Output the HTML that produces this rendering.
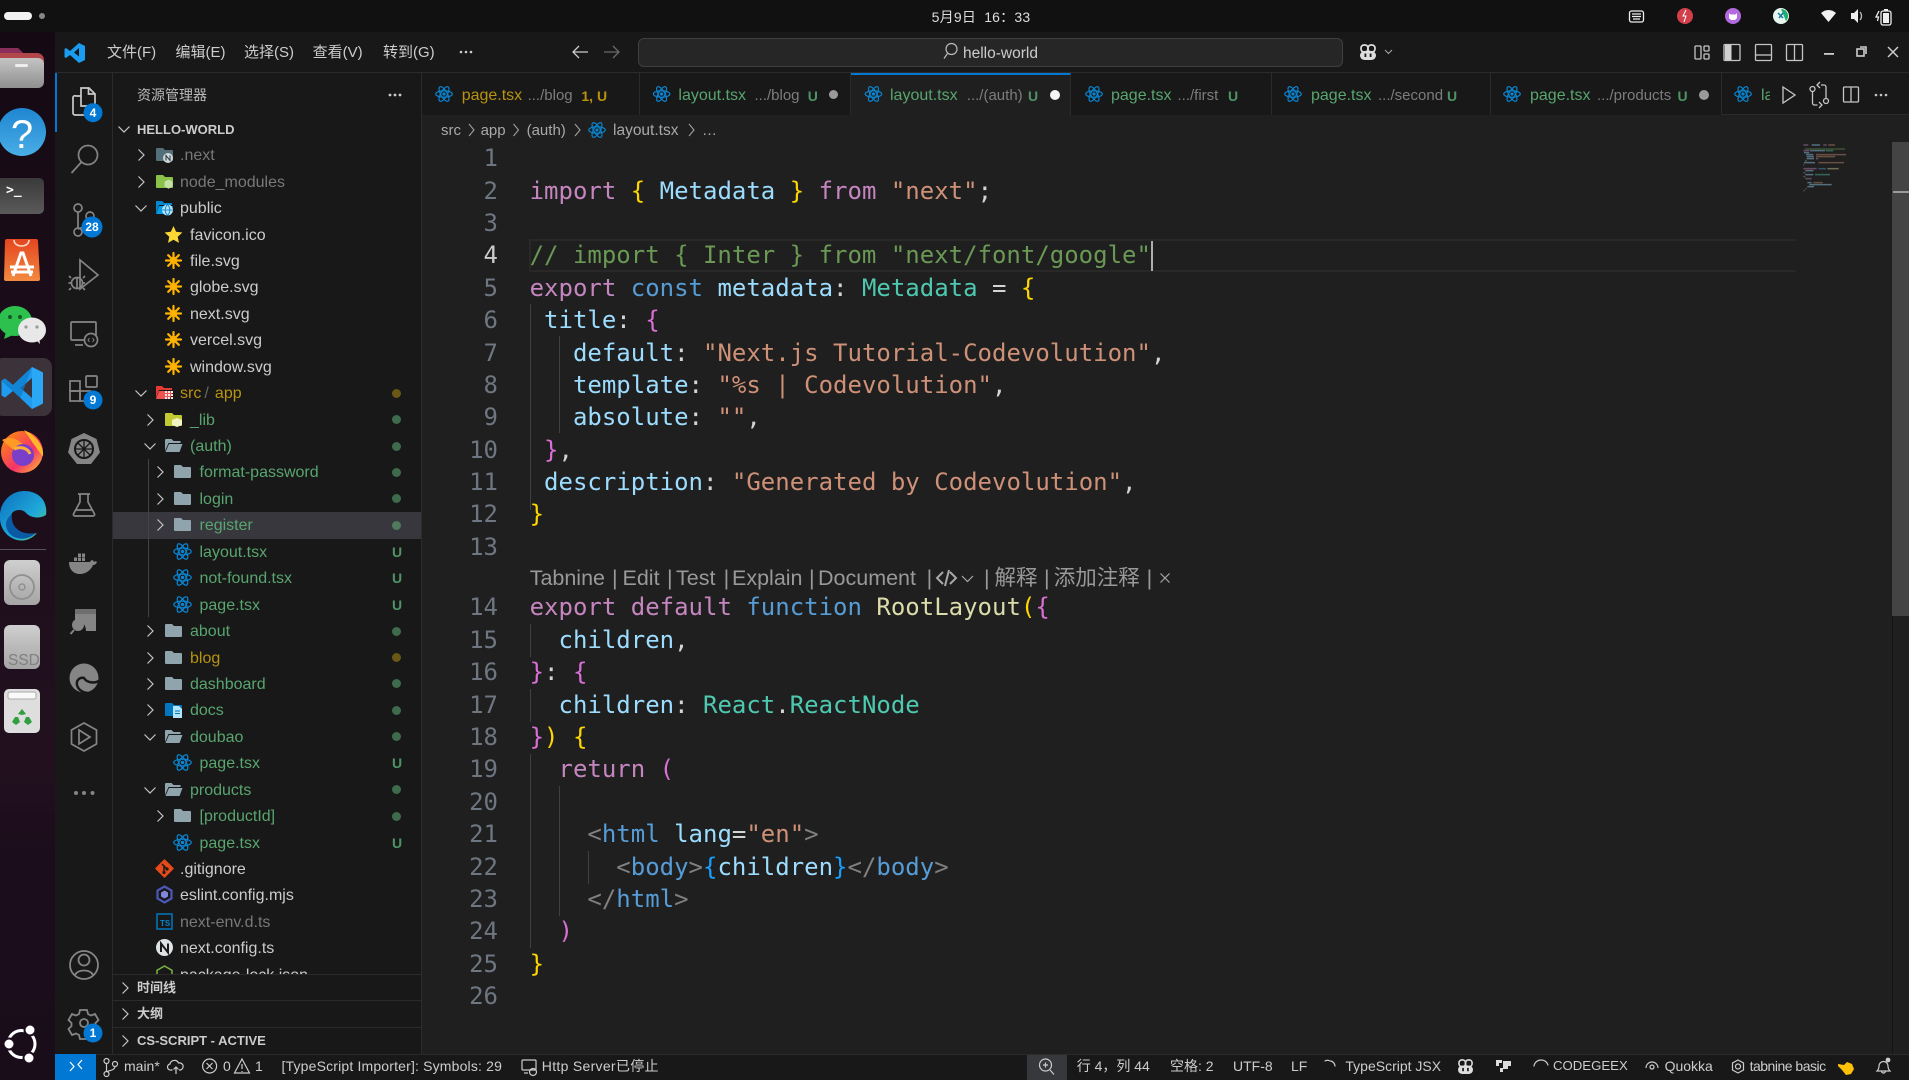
<!DOCTYPE html>
<html lang="zh"><head><meta charset="utf-8"><title>hello-world</title>
<style>
html,body{margin:0;padding:0;background:#1f1f1f}
#p{position:relative;width:1909px;height:1080px;overflow:hidden;font-family:"Liberation Sans","Noto Sans CJK SC",sans-serif;color:#ccc;background:#1f1f1f}
.a{position:absolute;white-space:pre}
.bx{position:absolute}
#rows{position:absolute;left:0;top:142.2px;width:421px;height:831.8px;overflow:hidden}
.r{position:relative;height:26.45px;line-height:26.45px;font-size:16px}
.r.s{background:linear-gradient(90deg,transparent 113px,#37373d 113px)}
.r svg{position:absolute}
.c{width:16px;height:16px;top:5px}.c1{left:133px}.c2{left:142px}.c3{left:152px}
.i{width:19px;height:19px;top:3px}.i1{left:155px}.i2{left:164px}.i3{left:173px}
.t{position:absolute;top:1px;white-space:pre;font-weight:400}.t1{left:180px}.t2{left:190px}.t3{left:199.5px}
.g{color:#59a56f}.y{color:#b8930f}.m{color:#787878}
.d{position:absolute;left:392px;top:8.5px;width:9px;height:9px;border-radius:50%;background:#3e6b4c;text-decoration:none}
.d.o{background:#6a5716}
.U{position:absolute;left:392px;top:0;font-size:14px;font-weight:700;color:#4f9466;text-decoration:none}
.tb{position:absolute;top:73px;height:42px;line-height:42px;border-right:1px solid #2b2b2b;background:#181818;box-sizing:border-box}
.tt{position:absolute;font-size:16px;line-height:42px;top:0;margin-top:2px;white-space:pre}
.dd{font-size:15px;color:#7d7d7d}
#code{position:absolute;left:529.6px;top:142.2px;font:24px/32.4px "DejaVu Sans Mono",monospace;color:#d4d4d4}
#code div{height:32.4px;white-space:pre}
#code .lens{height:28.2px}
#nums{position:absolute;left:440px;width:58px;top:142.2px;text-align:right;font:24px/32.4px "DejaVu Sans Mono",monospace;color:#6e7681}
#nums div{height:32.4px}
#nums .lens{height:28.2px}
.k{color:#c586c0}.b{color:#569cd6}.v{color:#9cdcfe}.ty{color:#4ec9b0}.s1{color:#ce9178}.cm{color:#6a9955}.f{color:#dcdcaa}.G{color:#ffd700}.P{color:#da70d6}.B{color:#179fff}.tg{color:#808080}
.ln{position:absolute;font-size:21.5px;line-height:28px;top:564px;color:#999;white-space:pre}
.st{position:absolute;top:1053px;line-height:26px;font-size:14px;color:#ccc;white-space:pre}
.mn{position:absolute;top:38px;line-height:30px;font-size:15px;color:#ccc;white-space:pre}
.br{position:absolute;top:116px;line-height:29px;font-size:15px;color:#a9a9a9;white-space:pre}
.ph{position:absolute;left:137px;font-size:13px;font-weight:700;color:#ccc;white-space:pre;line-height:26px}
</style></head><body><div id="p">

<svg width="0" height="0" style="position:absolute">
<defs>
<symbol id="cr" viewBox="0 0 16 16"><path d="M5.5 2.5l5.5 5.5-5.5 5.5" fill="none" stroke="#c5c5c5" stroke-width="1.2"/></symbol>
<symbol id="cd" viewBox="0 0 16 16"><path d="M2.5 5.5l5.5 5.5 5.5-5.5" fill="none" stroke="#c5c5c5" stroke-width="1.2"/></symbol>
<symbol id="re" viewBox="0 0 24 24"><g fill="none" stroke="#0a84d0" stroke-width="1.6"><ellipse cx="12" cy="12" rx="11" ry="4.3"/><ellipse cx="12" cy="12" rx="11" ry="4.3" transform="rotate(60 12 12)"/><ellipse cx="12" cy="12" rx="11" ry="4.3" transform="rotate(120 12 12)"/></g><circle cx="12" cy="12" r="2.2" fill="#0a84d0"/></symbol>
<symbol id="fo" viewBox="0 0 19 19"><path d="M2 3h6l2 2h7a1 1 0 011 1v9a1 1 0 01-1 1H2a1 1 0 01-1-1V4a1 1 0 011-1z" fill="#90a4ae"/></symbol>
<symbol id="fp" viewBox="0 0 19 19"><path d="M1.500 3h6l2 2h7v2H4.500L1 15V4z" fill="#90a4ae"/><path d="M5 8h13.500l-3 8H1.500z" fill="#90a4ae"/></symbol>
<symbol id="as" viewBox="0 0 19 19"><g stroke="#ffb300" stroke-width="2.2" stroke-linecap="round"><path d="M9.500 2v15M2 9.500h15M4.200 4.200l10.600 10.600M14.800 4.200L4.200 14.800"/></g><circle cx="9.500" cy="9.500" r="3.600" fill="#ffb300"/></symbol>
<symbol id="cp" viewBox="0 0 18 16"><g fill="none" stroke="#ddd" stroke-width="1.700"><rect x="2" y="1" width="7" height="7" rx="3"/><rect x="9" y="1" width="7" height="7" rx="3"/></g><rect x="1" y="7" width="16" height="9" rx="4.500" fill="#ddd"/><rect x="5.500" y="9.500" width="1.800" height="3.500" fill="#181818"/><rect x="10.700" y="9.500" width="1.800" height="3.500" fill="#181818"/></symbol>
</defs></svg>

<!-- chrome backgrounds -->
<div class="bx" style="left:0;top:0;width:1909px;height:32px;background:#111"></div>
<div class="bx" style="left:0;top:32px;width:55px;height:1048px;background:linear-gradient(180deg,#150a14 0,#22101f 70%,#1c0d1c 78%,#1a0d1a 100%)"></div>
<div class="bx" style="left:55px;top:32px;width:1854px;height:41px;background:#181818;border-bottom:1px solid #2b2b2b;box-sizing:border-box"></div>
<div class="bx" style="left:55px;top:73px;width:58px;height:981px;background:#181818;border-right:1px solid #2b2b2b;box-sizing:border-box"></div>
<div class="bx" style="left:113px;top:73px;width:309px;height:981px;background:#181818;border-right:1px solid #2b2b2b;box-sizing:border-box"></div>
<div class="bx" style="left:422px;top:73px;width:1487px;height:42px;background:#181818;border-bottom:1px solid #2b2b2b;box-sizing:border-box"></div>
<div class="bx" style="left:55px;top:1054px;width:1854px;height:26px;background:#181818;border-top:1px solid #2b2b2b;box-sizing:border-box"></div>
<div class="bx" style="left:55px;top:1054px;width:41px;height:26px;background:#0078d4"></div>
<div class="bx" style="left:1027px;top:1055px;width:40px;height:25px;background:#36383c"></div>
<div class="bx" style="left:55px;top:73px;width:2px;height:59px;background:#0078d4"></div>

<!-- top bar -->
<div class="bx" style="left:4px;top:12px;width:28px;height:8px;border-radius:4px;background:#f2f2f2"></div>
<div class="bx" style="left:39px;top:13px;width:6px;height:6px;border-radius:50%;background:#888"></div>
<div class="a" style="left:931px;top:7px;width:100px;text-align:center;font-size:14px;letter-spacing:.2px;line-height:21px;color:#ddd">5月9日  16：33</div>

<!-- title bar -->
<div class="mn" style="left:107px">文件(F)</div>
<div class="mn" style="left:175.500px">编辑(E)</div>
<div class="mn" style="left:244px">选择(S)</div>
<div class="mn" style="left:312.600px">查看(V)</div>
<div class="mn" style="left:383px">转到(G)</div>
<div class="bx" style="left:637.500px;top:38px;width:705px;height:29px;background:#262626;border:1px solid #3f3f3f;border-radius:6px;box-sizing:border-box"></div>
<div class="a" style="left:963px;top:39px;line-height:29px;font-size:15.500px;color:#ccc">hello-world</div>

<!-- sidebar -->
<div class="a" style="left:137px;top:83px;font-size:14px;line-height:24px;color:#bbb">资源管理器</div>
<div class="a" style="left:137px;top:117px;font-size:13px;font-weight:700;line-height:26px;color:#ccc">HELLO-WORLD</div>
<div id="rows">
<div class="r"><svg class="c c1"><use href="#cr"/></svg><svg class="i i1" viewBox="0 0 19 19"><path d="M2 3h6l2 2h7a1 1 0 011 1v9a1 1 0 01-1 1H2a1 1 0 01-1-1V4a1 1 0 011-1z" fill="#546e7a"/><circle cx="13" cy="13" r="5" fill="#cfd8dc"/><path d="M11 15.500v-5l4 5v-5" stroke="#263238" fill="none"/></svg><b class="t t1 m">.next</b></div>
<div class="r"><svg class="c c1"><use href="#cr"/></svg><svg class="i i1" viewBox="0 0 19 19"><path d="M2 3h6l2 2h7a1 1 0 011 1v9a1 1 0 01-1 1H2a1 1 0 01-1-1V4a1 1 0 011-1z" fill="#8bc34a"/><path d="M13.500 7.500l4 2.300v4.600l-4 2.300-4-2.300V9.800z" fill="#c5e1a5"/></svg><b class="t t1 m">node_modules</b></div>
<div class="r"><svg class="c c1"><use href="#cd"/></svg><svg class="i i1" viewBox="0 0 19 19"><path d="M1 3h6l2 2h8v2H4L1 15z" fill="#0288d1"/><path d="M4 8h14l-3 8H1z" fill="#039be5"/><circle cx="12.500" cy="12" r="5.500" fill="#b3e5fc"/><path d="M7 12h11M12.500 6.500c-3 3.500-3 7.500 0 11M12.500 6.500c3 3.500 3 7.500 0 11" stroke="#0277bd" fill="none" stroke-width=".8"/></svg><b class="t t1" style="color:#ccc">public</b></div>
<div class="r"><svg class="i i2" viewBox="0 0 19 19"><path d="M9.500 1l2.600 5.800 6.300.7-4.700 4.200 1.300 6.200-5.500-3.200-5.500 3.200 1.300-6.200L.6 7.500l6.300-.7z" fill="#fdd835"/></svg><b class="t t2">favicon.ico</b></div>
<div class="r"><svg class="i i2"><use href="#as"/></svg><b class="t t2">file.svg</b></div>
<div class="r"><svg class="i i2"><use href="#as"/></svg><b class="t t2">globe.svg</b></div>
<div class="r"><svg class="i i2"><use href="#as"/></svg><b class="t t2">next.svg</b></div>
<div class="r"><svg class="i i2"><use href="#as"/></svg><b class="t t2">vercel.svg</b></div>
<div class="r"><svg class="i i2"><use href="#as"/></svg><b class="t t2">window.svg</b></div>
<div class="r"><svg class="c c1"><use href="#cd"/></svg><svg class="i i1" viewBox="0 0 19 19"><path d="M1 3h6l2 2h8v2H4L1 15z" fill="#e53935"/><path d="M4 8h14l-3 8H1z" fill="#ef5350"/><g fill="#fbe9e7"><rect x="10" y="8" width="2" height="2"/><rect x="13" y="8" width="2" height="2"/><rect x="16" y="8" width="2" height="2"/><rect x="10" y="11" width="2" height="2"/><rect x="13" y="11" width="2" height="2"/><rect x="16" y="11" width="2" height="2"/><rect x="10" y="14" width="2" height="2"/><rect x="13" y="14" width="2" height="2"/><rect x="16" y="14" width="2" height="2"/></g></svg><b class="t t1 y">src<span style="color:#666;letter-spacing:-1.400px"> / </span> app</b><u class="d o"></u></div>
<div class="r"><svg class="c c2"><use href="#cr"/></svg><svg class="i i2" viewBox="0 0 19 19"><path d="M2 3h6l2 2h7a1 1 0 011 1v9a1 1 0 01-1 1H2a1 1 0 01-1-1V4a1 1 0 011-1z" fill="#c0ca33"/><path d="M8 10l5-2 5 2v5l-5 2-5-2z" fill="#f0f4c3"/></svg><b class="t t2 g">_lib</b><u class="d"></u></div>
<div class="r"><svg class="c c2"><use href="#cd"/></svg><svg class="i i2"><use href="#fp"/></svg><b class="t t2 g">(auth)</b><u class="d"></u></div>
<div class="r"><svg class="c c3"><use href="#cr"/></svg><svg class="i i3"><use href="#fo"/></svg><b class="t t3 g">format-password</b><u class="d"></u></div>
<div class="r"><svg class="c c3"><use href="#cr"/></svg><svg class="i i3"><use href="#fo"/></svg><b class="t t3 g">login</b><u class="d"></u></div>
<div class="r s"><svg class="c c3"><use href="#cr"/></svg><svg class="i i3"><use href="#fo"/></svg><b class="t t3 g">register</b><u class="d" style="background:#4f7a5e"></u></div>
<div class="r"><svg class="i i3"><use href="#re"/></svg><b class="t t3 g">layout.tsx</b><u class="U">U</u></div>
<div class="r"><svg class="i i3"><use href="#re"/></svg><b class="t t3 g">not-found.tsx</b><u class="U">U</u></div>
<div class="r"><svg class="i i3"><use href="#re"/></svg><b class="t t3 g">page.tsx</b><u class="U">U</u></div>
<div class="r"><svg class="c c2"><use href="#cr"/></svg><svg class="i i2"><use href="#fo"/></svg><b class="t t2 g">about</b><u class="d"></u></div>
<div class="r"><svg class="c c2"><use href="#cr"/></svg><svg class="i i2"><use href="#fo"/></svg><b class="t t2 y">blog</b><u class="d o"></u></div>
<div class="r"><svg class="c c2"><use href="#cr"/></svg><svg class="i i2"><use href="#fo"/></svg><b class="t t2 g">dashboard</b><u class="d"></u></div>
<div class="r"><svg class="c c2"><use href="#cr"/></svg><svg class="i i2" viewBox="0 0 19 19"><path d="M2 3h6l2 2h7a1 1 0 011 1v9a1 1 0 01-1 1H2a1 1 0 01-1-1V4a1 1 0 011-1z" fill="#0277bd"/><path d="M9 6h6l3 3v9H9z" fill="#b3e5fc"/><path d="M11 11h5M11 13.500h5" stroke="#0277bd"/></svg><b class="t t2 g">docs</b><u class="d"></u></div>
<div class="r"><svg class="c c2"><use href="#cd"/></svg><svg class="i i2"><use href="#fp"/></svg><b class="t t2 g">doubao</b><u class="d"></u></div>
<div class="r"><svg class="i i3"><use href="#re"/></svg><b class="t t3 g">page.tsx</b><u class="U">U</u></div>
<div class="r"><svg class="c c2"><use href="#cd"/></svg><svg class="i i2"><use href="#fp"/></svg><b class="t t2 g">products</b><u class="d"></u></div>
<div class="r"><svg class="c c3"><use href="#cr"/></svg><svg class="i i3"><use href="#fo"/></svg><b class="t t3 g">[productId]</b><u class="d"></u></div>
<div class="r"><svg class="i i3"><use href="#re"/></svg><b class="t t3 g">page.tsx</b><u class="U">U</u></div>
<div class="r"><svg class="i i1" viewBox="0 0 19 19"><path d="M9.500 1l8.500 8.500-8.500 8.500L1 9.500z" fill="#e64a19" stroke="#e64a19" stroke-linejoin="round" stroke-width="1.500"/><path d="M7 5l5 5M9 7v6" stroke="#1a1a1a" stroke-width="1.500"/><circle cx="9" cy="13.500" r="1.600" fill="#1a1a1a"/><circle cx="12" cy="10" r="1.600" fill="#1a1a1a"/></svg><b class="t t1">.gitignore</b></div>
<div class="r"><svg class="i i1" viewBox="0 0 19 19"><path d="M9.500 1.500l7 4v8l-7 4-7-4v-8z" fill="none" stroke="#4b57b8" stroke-width="2.200"/><path d="M9.500 5.500l3.500 2v4l-3.500 2-3.500-2v-4z" fill="#8187d8"/></svg><b class="t t1">eslint.config.mjs</b></div>
<div class="r"><svg class="i i1" viewBox="0 0 19 19"><rect x="2" y="2" width="15" height="15" fill="none" stroke="#0277bd" stroke-width="1.500"/><text x="5" y="14" font-size="8" font-weight="700" fill="#0288d1" font-family="Liberation Sans">TS</text></svg><b class="t t1 m">next-env.d.ts</b></div>
<div class="r"><svg class="i i1" viewBox="0 0 19 19"><circle cx="9.500" cy="9.500" r="8.500" fill="#dfe3e5"/><path d="M6 14V5.500l7 9V5.500" fill="none" stroke="#1a1a1a" stroke-width="2"/></svg><b class="t t1">next.config.ts</b></div>
<div class="r"><svg class="i i1" viewBox="0 0 19 19"><path d="M9.500 1l7.500 4.300v8.400l-7.500 4.300L2 13.700V5.300z" fill="none" stroke="#7cb342" stroke-width="1.500"/></svg><b class="t t1">package-lock.json</b></div>
</div>
<div class="bx" style="left:147.500px;top:459px;width:1px;height:158px;background:#444"></div>
<div class="bx" style="left:113px;top:974px;width:308px;height:1px;background:#2b2b2b"></div>
<div class="bx" style="left:113px;top:1000px;width:308px;height:1px;background:#2b2b2b"></div>
<div class="bx" style="left:113px;top:1027px;width:308px;height:1px;background:#2b2b2b"></div>
<div class="ph" style="top:975px">时间线</div>
<div class="ph" style="top:1001px">大纲</div>
<div class="ph" style="top:1028px">CS-SCRIPT - ACTIVE</div>

<!-- tabs -->
<div class="tb" style="left:423px;width:217px"></div>
<div class="tb" style="left:640px;width:211px"></div>
<div class="tb" style="left:851px;width:220px;background:#1f1f1f;border-top:2px solid #0078d4;height:43px"></div>
<div class="tb" style="left:1071px;width:201px"></div>
<div class="tb" style="left:1272px;width:219px"></div>
<div class="tb" style="left:1491px;width:231px"></div>
<div class="a tt y" style="left:461.700px;top:73px">page.tsx</div><div class="a tt dd" style="left:527.600px;top:73px">.../blog</div><div class="a tt" style="left:581.400px;top:73px;font-size:14px;font-weight:700;color:#b8930f">1, U</div>
<div class="a tt g" style="left:678.400px;top:73px">layout.tsx</div><div class="a tt dd" style="left:754.500px;top:73px">.../blog</div><div class="a tt" style="left:807.800px;top:73px;font-size:14px;font-weight:700;color:#4f9466">U</div>
<div class="a tt g" style="left:890px;top:73px">layout.tsx</div><div class="a tt dd" style="left:966.800px;top:73px">.../(auth)</div><div class="a tt" style="left:1028px;top:73px;font-size:14px;font-weight:700;color:#4f9466">U</div>
<div class="a tt g" style="left:1111px;top:73px">page.tsx</div><div class="a tt dd" style="left:1177.500px;top:73px">.../first</div><div class="a tt" style="left:1228px;top:73px;font-size:14px;font-weight:700;color:#4f9466">U</div>
<div class="a tt g" style="left:1311px;top:73px">page.tsx</div><div class="a tt dd" style="left:1378px;top:73px">.../second</div><div class="a tt" style="left:1447px;top:73px;font-size:14px;font-weight:700;color:#4f9466">U</div>
<div class="a tt g" style="left:1530px;top:73px">page.tsx</div><div class="a tt dd" style="left:1597px;top:73px">.../products</div><div class="a tt" style="left:1677.500px;top:73px;font-size:14px;font-weight:700;color:#4f9466">U</div>
<div class="a tt g" style="left:1761px;top:73px;width:9px;overflow:hidden">la</div>
<div class="bx" style="left:1771px;top:73px;width:138px;height:41px;background:#181818"></div>
<div class="bx" style="left:829px;top:90px;width:9px;height:9px;border-radius:50%;background:#9a9a9a"></div>
<div class="bx" style="left:1050px;top:90px;width:10px;height:10px;border-radius:50%;background:#f5f5f5"></div>
<div class="bx" style="left:1699px;top:90px;width:10px;height:10px;border-radius:50%;background:#9a9a9a"></div>

<!-- breadcrumbs -->
<div class="br" style="left:441px">src</div><div class="br" style="left:480.600px">app</div><div class="br" style="left:526.600px">(auth)</div><div class="br" style="left:613px;font-size:15.500px">layout.tsx</div><div class="br" style="left:702px">…</div>

<!-- editor -->
<div class="bx" style="left:529px;top:239px;width:1267px;height:33px;border:2px solid #282828;border-right:0;box-sizing:border-box"></div>
<div id="nums">
<div>1</div><div>2</div><div>3</div><div style="color:#ccc">4</div><div>5</div><div>6</div><div>7</div><div>8</div><div>9</div><div>10</div><div>11</div><div>12</div><div>13</div><div class="lens"></div><div>14</div><div>15</div><div>16</div><div>17</div><div>18</div><div>19</div><div>20</div><div>21</div><div>22</div><div>23</div><div>24</div><div>25</div><div>26</div>
</div>
<div class="bx" style="left:529.500px;top:304px;width:1px;height:206px;background:#404040"></div>
<div class="bx" style="left:558.500px;top:336px;width:1px;height:97px;background:#404040"></div>
<div class="bx" style="left:529.500px;top:624px;width:1px;height:33px;background:#404040"></div>
<div class="bx" style="left:529.500px;top:689px;width:1px;height:33px;background:#404040"></div>
<div class="bx" style="left:529.500px;top:754px;width:1px;height:194px;background:#404040"></div>
<div class="bx" style="left:558.500px;top:786px;width:1px;height:130px;background:#404040"></div>
<div class="bx" style="left:587.500px;top:851px;width:1px;height:33px;background:#404040"></div>
<div id="code">
<div> </div>
<div><span class="k">import</span> <span class="G">{</span> <span class="v">Metadata</span> <span class="G">}</span> <span class="k">from</span> <span class="s1">"next"</span>;</div>
<div> </div>
<div class="cm">// import { Inter } from "next/font/google"</div>
<div><span class="k">export</span> <span class="b">const</span> <span class="v">metadata</span>: <span class="ty">Metadata</span> = <span class="G">{</span></div>
<div> <span class="v">title</span>: <span class="P">{</span></div>
<div>   <span class="v">default</span>: <span class="s1">"Next.js Tutorial-Codevolution"</span>,</div>
<div>   <span class="v">template</span>: <span class="s1">"%s | Codevolution"</span>,</div>
<div>   <span class="v">absolute</span>: <span class="s1">""</span>,</div>
<div> <span class="P">}</span>,</div>
<div> <span class="v">description</span>: <span class="s1">"Generated by Codevolution"</span>,</div>
<div><span class="G">}</span></div>
<div> </div>
<div class="lens"> </div>
<div><span class="k">export</span> <span class="k">default</span> <span class="b">function</span> <span class="f">RootLayout</span><span class="G">(</span><span class="P">{</span></div>
<div>  <span class="v">children</span>,</div>
<div><span class="P">}</span>: <span class="P">{</span></div>
<div>  <span class="v">children</span>: <span class="ty">React</span>.<span class="ty">ReactNode</span></div>
<div><span class="P">}</span><span class="G">)</span> <span class="G">{</span></div>
<div>  <span class="k">return</span> <span class="P">(</span></div>
<div> </div>
<div>    <span class="tg">&lt;</span><span class="b">html</span> <span class="v">lang</span>=<span class="s1">"en"</span><span class="tg">&gt;</span></div>
<div>      <span class="tg">&lt;</span><span class="b">body</span><span class="tg">&gt;</span><span class="B">{</span><span class="v">children</span><span class="B">}</span><span class="tg">&lt;/</span><span class="b">body</span><span class="tg">&gt;</span></div>
<div>    <span class="tg">&lt;/</span><span class="b">html</span><span class="tg">&gt;</span></div>
<div>  <span class="P">)</span></div>
<div><span class="G">}</span></div>
<div> </div>
</div>
<div class="bx" style="left:1151px;top:241px;width:2px;height:30px;background:#aeafad"></div>

<!-- codelens -->
<div class="ln" style="left:529.700px">Tabnine</div><div class="ln" style="left:612px">|</div>
<div class="ln" style="left:622.500px">Edit</div><div class="ln" style="left:667px">|</div>
<div class="ln" style="left:676px">Test</div><div class="ln" style="left:723.600px">|</div>
<div class="ln" style="left:732px">Explain</div><div class="ln" style="left:809px">|</div>
<div class="ln" style="left:818px">Document</div><div class="ln" style="left:926.600px">|</div>
<div class="ln" style="left:984px">|</div>
<div class="ln" style="left:994.500px">解释</div><div class="ln" style="left:1044px">|</div>
<div class="ln" style="left:1053.700px">添加注释</div><div class="ln" style="left:1146.600px">|</div>

<!-- minimap + scrollbar -->
<div class="bx" style="left:1892px;top:142px;width:17px;height:912px;border-left:1px solid #141414;box-sizing:border-box"></div>
<div class="bx" style="left:1892px;top:142px;width:17px;height:474px;background:#444"></div>
<div class="bx" style="left:1893px;top:191px;width:16px;height:2px;background:#9a9a9a"></div>
<svg class="bx" style="left:1790px;top:130px" width="102" height="80" viewBox="0 0 306 240"><g opacity=".42">
<path stroke-width="4.500" fill="none" stroke="#c586c0" d="M40 45h15M100 45h10M40 62h18M40 116h40M46 146h19"/>
<path stroke-width="4.500" fill="none" stroke="#9cdcfe" d="M65 45h25M60 62h45M42 68h16M48 74h22M50 80h22M50 86h22M42 98h33M46 122h24M46 134h24M52 158h13M58 164h67M52 170h20"/>
<path stroke-width="4.500" fill="none" stroke="#ce9178" d="M115 45h20M78 74h90M78 80h57M78 86h7M85 98h77M70 158h28"/>
<path stroke-width="4.500" fill="none" stroke="#6a9955" d="M45 57h120"/>
<path stroke-width="4.500" fill="none" stroke="#4ec9b0" d="M108 62h22M75 134h45"/>
<path stroke-width="4.500" fill="none" stroke="#569cd6" d="M85 116h23"/>
<path stroke-width="4.500" fill="none" stroke="#dcdcaa" d="M112 116h34"/>
<path stroke-width="4.500" fill="none" stroke="#999" d="M45 92h5M40 104h3M40 128h6M40 140h6M46 176h4M40 182h4"/>
</g></svg>

<!-- status bar -->
<div class="st" style="left:124px">main*</div>
<div class="st" style="left:223px">0</div>
<div class="st" style="left:255px">1</div>
<div class="st" style="left:281.500px;letter-spacing:.17px">[TypeScript Importer]: Symbols: 29</div>
<div class="st" style="left:541.800px;letter-spacing:.3px">Http Server已停止</div>
<div class="st" style="left:1076.700px">行 4，列 44</div>
<div class="st" style="left:1170px">空格: 2</div>
<div class="st" style="left:1233px">UTF-8</div>
<div class="st" style="left:1291px">LF</div>
<div class="st" style="left:1345.400px">TypeScript JSX</div>
<div class="st" style="left:1553px;font-size:13.200px">CODEGEEX</div>
<div class="st" style="left:1664.600px">Quokka</div>
<div class="st" style="left:1749.600px;letter-spacing:-.5px">tabnine basic</div>

<!-- icon overlay in page coordinates -->
<svg class="bx" style="left:0;top:0;pointer-events:none" width="1909" height="1080" viewBox="0 0 1909 1080">
<defs>
<linearGradient id="gF" x1="0" y1="0" x2="0" y2="1"><stop offset="0" stop-color="#c4c4c4"/><stop offset="1" stop-color="#8f8f8f"/></linearGradient>
<linearGradient id="gH" x1="0" y1="0" x2="0" y2="1"><stop offset="0" stop-color="#1f86d1"/><stop offset="1" stop-color="#49ade6"/></linearGradient>
<linearGradient id="gT" x1="0" y1="0" x2="0" y2="1"><stop offset="0" stop-color="#3a3a3a"/><stop offset="1" stop-color="#5a5a5a"/></linearGradient>
<linearGradient id="gA" x1="0" y1="0" x2="0" y2="1"><stop offset="0" stop-color="#e4451f"/><stop offset="1" stop-color="#f28a40"/></linearGradient>
<linearGradient id="gE" x1="0" y1="0" x2="1" y2="1"><stop offset="0" stop-color="#0a70c0"/><stop offset=".6" stop-color="#20a8d8"/><stop offset="1" stop-color="#63d468"/></linearGradient>
<linearGradient id="gW" x1="0" y1="0" x2="1" y2="1"><stop offset="0" stop-color="#ff9500"/><stop offset=".6" stop-color="#f5326b"/><stop offset="1" stop-color="#ffc82c"/></linearGradient>
<linearGradient id="gD" x1="0" y1="0" x2="0" y2="1"><stop offset="0" stop-color="#cfcfcf"/><stop offset="1" stop-color="#a5a5a5"/></linearGradient>
</defs>

<!-- tray -->
<g fill="none" stroke="#eee" stroke-width="1.300"><rect x="1629.500" y="11" width="14" height="11" rx="2"/><path d="M1632 14h9M1632 16.500h9M1633 19h7"/></g>
<circle cx="1685" cy="16" r="8" fill="#d13f4b"/><path d="M1686 10l-3 6h3l-2 6" stroke="#fff" fill="none"/>
<circle cx="1733" cy="16" r="8" fill="#b36ae0"/><path d="M1729 13l1.500 1.500h5l1.500-1.500v5l-2 2h-4l-2-2z" fill="#fff"/>
<circle cx="1781" cy="16" r="8" fill="#e8f5ee"/><path d="M1781 9a7 7 0 015 12z" fill="#1fae72"/><path d="M1778 13l5 5M1783 13l-4 5" stroke="#1177aa" stroke-width="1.500"/>
<path d="M1821 13c4.500-4 10.500-4 15 0l-7.500 9z" fill="#f2f2f2"/>
<path d="M1851 13h3l4-4v14l-4-4h-3z" fill="#eee"/><path d="M1860 12a6 6 0 010 8" stroke="#bbb" fill="none" stroke-width="1.300"/>
<rect x="1881" y="11" width="10" height="14" rx="2" fill="none" stroke="#eee" stroke-width="1.300"/><rect x="1883" y="13" width="6" height="10" fill="#eee"/><rect x="1884" y="9" width="4" height="2" fill="#eee"/><path d="M1879 11l-3 6h2.500l-1 4" stroke="#eee" fill="none" stroke-width="1.300"/>

<!-- dock -->
<path d="M0 48h18l5 5h14a7 7 0 017 7v10H0z" fill="#b1474a"/><path d="M0 48h18l5 5H0z" fill="#8a2d5a"/>
<path d="M0 58h38a6 6 0 016 6v18a6 6 0 01-6 6H0z" fill="url(#gF)"/><rect x="15" y="64" width="13" height="3" rx="1.500" fill="#eee"/>
<circle cx="22" cy="132" r="24" fill="url(#gH)" transform="translate(0 0)"/>
<text x="22" y="148" text-anchor="middle" font-size="40" fill="#fff" font-family="Liberation Sans">?</text>
<rect x="-4" y="178" width="48" height="36" rx="5" fill="url(#gT)"/>
<text x="6" y="194" font-size="13" fill="#fff" font-family="DejaVu Sans Mono" font-weight="700">&gt;_</text>
<path d="M7 239h29a2 2 0 012 2l2 38a2 2 0 01-2 2H6a2 2 0 01-2-2l1-38a2 2 0 012-2z" fill="url(#gA)"/>
<path d="M14 240c0 8 15 8 15 0" stroke="#ffd9c8" fill="none" stroke-width="1.600"/>
<path d="M13 276l8-23h2l8 23M10 267h24M11 272h22" stroke="#fff" stroke-width="3" fill="none"/>
<ellipse cx="15" cy="321" rx="17" ry="15" fill="#2ec04f"/><path d="M6 332l-2 7 9-4z" fill="#2ec04f"/><circle cx="10" cy="317" r="2" fill="#145c27"/><circle cx="20" cy="317" r="2" fill="#145c27"/>
<ellipse cx="32" cy="330" rx="14" ry="12.500" fill="#e8e8e8"/><path d="M36 340l4 4-1-7z" fill="#e8e8e8"/><circle cx="26" cy="327" r="1.600" fill="#999"/><circle cx="37" cy="327" r="1.600" fill="#999"/>
<rect x="-6" y="358" width="58" height="58" rx="9" fill="#3b3339"/>
<path d="M32 367l11 5.500v31L32 409 13 391l-8 6.500-3.500-2v-15l3.500-2 8 6.500zM32 378l-11.500 10L32 398z" fill="#1f9cf0"/><path d="M32 367l11 5.500v31L32 409z" fill="#2aa7f5"/><path d="M32 367L13 385.500 5 379l-3.500 2v0l19 17z" fill="#0b7bc7" opacity=".7"/>
<circle cx="22" cy="452" r="21" fill="url(#gW)"/><path d="M24 430c14 6 20 18 19 26-4-4-8-10-19-26z" fill="#ffb72a"/><path d="M2 440c6-3 12-3 18 2l8 6-12 4z" fill="#ff9a26"/><circle cx="23" cy="455" r="11" fill="#7a3fc9"/><path d="M14 449c6-3 14-1 16 5" stroke="#ffae3a" stroke-width="3" fill="none"/>
<path d="M0 520c-2-16 10-29 24-29 14 0 24 9 22 24-6 4-14 3-19-1-4-6-14-5-16 1-2 7 3 13 9 17 6 3 12 3 17 1-8 9-18 9-25 5-6-3-11-9-12-18z" fill="url(#gE)"/>
<path d="M12 514c-2 12 8 22 24 19-9 8-20 7-26 1-6-7-5-15 2-20z" fill="#0b5aa5"/>
<rect x="0" y="549" width="46" height="1" fill="#555"/>
<rect x="4" y="560" width="36" height="45" rx="6" fill="url(#gD)"/><circle cx="22" cy="587" r="12" fill="none" stroke="#8f8f8f" stroke-width="1.800"/><circle cx="22" cy="587" r="3" fill="none" stroke="#8f8f8f" stroke-width="1.500"/>
<rect x="4" y="625" width="36" height="44" rx="6" fill="url(#gD)"/><text x="8" y="665" font-size="15.500" fill="#808080" font-family="Liberation Sans">SSD</text>
<rect x="4" y="689" width="36" height="44" rx="5" fill="#dedede"/><rect x="8" y="692" width="28" height="7" rx="2" fill="#fafafa" stroke="#aaa"/>
<path d="M22 709l4 5-4 1-4-1zM15 717l-3 5 4 3 4-3-2-5zM29 717l3 5-4 3-4-3 2-5z" fill="#2f9f3f"/>
<circle cx="21.500" cy="1044" r="13.500" fill="none" stroke="#fff" stroke-width="3"/><g fill="#fff" stroke="#1c0d1c" stroke-width="2"><circle cx="30" cy="1030" r="5.500"/><circle cx="9" cy="1044" r="5.500"/><circle cx="29" cy="1058" r="5.500"/></g>

<!-- title bar icons -->
<path d="M79 43l6 3v14l-6 3-9-8-4 3-1.500-1v-8l1.500-1 4 3zM79 48l-5 4.500 5 4z" fill="#1a9cf0"/>
<g fill="#ccc"><circle cx="461" cy="52" r="1.300"/><circle cx="466" cy="52" r="1.300"/><circle cx="471" cy="52" r="1.300"/></g>
<path d="M588 52h-15M579 46l-6 6 6 6" stroke="#ccc" fill="none" stroke-width="1.300"/>
<path d="M604 52h15M613 46l6 6-6 6" stroke="#6a6a6a" fill="none" stroke-width="1.300"/>
<circle cx="951.500" cy="49" r="5.500" fill="none" stroke="#bbb" stroke-width="1.200"/><path d="M947.500 53.500l-3.500 5" stroke="#bbb" stroke-width="1.200"/>
<use href="#cp" x="1359" y="44" width="18" height="16"/>
<path d="M1385 50l3.500 3.500L1392 50" stroke="#aaa" fill="none"/>
<g fill="none" stroke="#c5c5c5" stroke-width="1.300"><rect x="1695" y="46" width="6" height="13" rx="1"/><rect x="1704" y="46" width="5" height="5" rx="1"/><rect x="1704" y="54" width="5" height="5" rx="1"/>
<rect x="1724" y="44.500" width="16" height="16" rx="1"/><rect x="1755.500" y="44.500" width="16" height="16" rx="1"/><path d="M1756 55h15"/><rect x="1786.500" y="44.500" width="16" height="16" rx="1"/><path d="M1794.500 45v15"/></g>
<rect x="1725" y="45" width="6.500" height="15" fill="#d0d0d0"/>
<rect x="1824" y="53" width="10" height="1.800" fill="#ccc"/>
<rect x="1857" y="49" width="7" height="7" fill="none" stroke="#ccc" stroke-width="1.600"/><path d="M1860 47h6v7" fill="none" stroke="#ccc" stroke-width="1.600"/>
<path d="M1888 47l10 10M1898 47l-10 10" stroke="#ccc" stroke-width="1.500"/>
<g fill="#ccc"><circle cx="390" cy="95" r="1.400"/><circle cx="395" cy="95" r="1.400"/><circle cx="400" cy="95" r="1.400"/></g>

<!-- chevrons headers -->
<use href="#cd" x="116" y="121" width="16" height="16"/>
<use href="#cr" x="117" y="980" width="16" height="16"/><use href="#cr" x="117" y="1006" width="16" height="16"/><use href="#cr" x="117" y="1033" width="16" height="16"/>

<!-- activity bar -->
<g fill="none" stroke="#858585" stroke-width="1.700">
<g stroke="#c9c9c9"><path d="M81 88h8l6 6v12h-14z"/><path d="M88.500 88v6h6.500"/><path d="M81 96h-5a2 2 0 00-3 2v15a2 2 0 002 2h11a2 2 0 002-2v-7"/></g>
<circle cx="88" cy="155" r="9.500"/><path d="M81.500 162L71.500 173"/>
<circle cx="78" cy="208" r="4"/><circle cx="90" cy="216" r="4"/><circle cx="78" cy="232" r="4"/><path d="M78 212v16M90 220c0 5-6 7-12 9"/>
<path d="M80 260l18 15-18 14z"/><circle cx="77" cy="283" r="5.500"/><path d="M77 277v12M71 278l-2-2M83 278l2-2M71 283h-2.500M85 283h-2M71 288l-2 2M83 288l2 2"/>
<rect x="71" y="322" width="25" height="18" rx="1"/><path d="M75 345h8"/><circle cx="91" cy="340" r="6.500" fill="#181818"/><path d="M89.500 338l-1.500 2 1.500 2M92.500 338l1.500 2-1.500 2" stroke-width="1"/>
<rect x="70" y="381" width="10" height="10"/><rect x="70" y="391" width="10" height="10"/><rect x="80" y="391" width="10" height="10"/><rect x="86" y="376" width="11" height="11" rx="1"/>
<path d="M78 494h12M80 494v8l-6.500 12a1.500 1.500 0 001.500 2h18a1.500 1.500 0 001.500-2L88 502v-8M76 510h16"/>
<path d="M84 723l12.500 7v14l-12.500 7-12.500-7v-14z"/><path d="M79 730l11 7-11 7z"/>
</g>
<path d="M84 433l12.500 6 3.500 13.500-9 11.500H77l-9-11.500 3.500-13.500z" fill="#858585"/><circle cx="84" cy="449" r="9" fill="none" stroke="#181818" stroke-width="2"/><path d="M84 440v18M75 449h18M78 443l12 12M90 443l-12 12" stroke="#181818" stroke-width="1.300"/>
<path d="M69 562h21c1-2 3-3 4 0 1-1 2-1 3 0-1 2-2 3-4 3-2 5-7 9-13 9-7 0-11-5-11-12z" fill="#858585"/><g fill="#858585"><rect x="74" y="557.500" width="3" height="3.500"/><rect x="78" y="557.500" width="3" height="3.500"/><rect x="82" y="557.500" width="3" height="3.500"/><rect x="78" y="553.500" width="3" height="3.500"/><rect x="82" y="553.500" width="3" height="3.500"/></g>
<path d="M75 609h21v22H86c0-6-4-11-11-11z" fill="#858585"/><rect x="75" y="609" width="21" height="5" fill="#6f6f6f"/><circle cx="78" cy="625" r="6" fill="#858585"/><path d="M74 630l-3.500 4" stroke="#858585" stroke-width="2"/>
<circle cx="84" cy="678" r="14.500" fill="#858585"/><path d="M99 681c-6 3-13 1-15-3-4-1-8 2-7 7 1 4 5 8 12 8" stroke="#181818" stroke-width="2.500" fill="none"/>
<g fill="#858585"><circle cx="76" cy="793" r="2"/><circle cx="84" cy="793" r="2"/><circle cx="92.500" cy="793" r="2"/></g>
<g fill="none" stroke="#858585" stroke-width="1.800"><circle cx="84" cy="965" r="14"/><circle cx="84" cy="960" r="5.500"/><path d="M75 975c3-6 15-6 18 0"/>
<circle cx="84" cy="1023" r="4"/><path d="M80 1010h7l1 4 3 1.500 4-1.500 3.500 6-3 3v3l3 3-3.500 6-4-1.500-3 1.500-1 4h-7l-1-4-3-1.500-4 1.500-3.500-6 3-3v-3l-3-3 3.500-6 4 1.500 3-1.500z"/></g>
<g fill="#0078d4"><circle cx="93" cy="112.700" r="9.500"/><circle cx="92" cy="227" r="10.500"/><circle cx="93" cy="400" r="9.500"/><circle cx="93" cy="1033" r="9.500"/></g>
<g fill="#fff" font-family="Liberation Sans" font-size="12" font-weight="700" text-anchor="middle"><text x="93" y="117">4</text><text x="92" y="231">28</text><text x="93" y="404">9</text><text x="93" y="1037">1</text></g>

<!-- tab icons + breadcrumbs react -->
<g><use href="#re" x="435" y="85" width="18" height="18"/><use href="#re" x="652.600" y="85" width="18" height="18"/><use href="#re" x="864.500" y="85" width="18" height="18"/><use href="#re" x="1085" y="85" width="18" height="18"/><use href="#re" x="1284" y="85" width="18" height="18"/><use href="#re" x="1503" y="85" width="18" height="18"/><use href="#re" x="1734" y="85" width="18" height="18"/><use href="#re" x="588" y="121" width="18" height="18"/></g>

<!-- breadcrumb chevrons -->
<g fill="none" stroke="#a0a0a0" stroke-width="1.100"><path d="M469 124l5 6-5 6M513.500 124l5 6-5 6M575 124l5 6-5 6M689 124l5 6-5 6"/></g>

<!-- editor actions -->
<path d="M1783 87l12 8-12 8z" fill="none" stroke="#c5c5c5" stroke-width="1.300"/>
<g fill="none" stroke="#c5c5c5" stroke-width="1.300"><circle cx="1812.500" cy="89" r="2.500"/><circle cx="1826" cy="101" r="2.500"/><path d="M1812.500 92v11a2 2 0 002 2h3M1826 98V87a2 2 0 00-2-2h-3M1820 82l-3 3 3 3M1819 102l3 3-3 3"/>
<rect x="1843.500" y="87" width="15" height="15" rx="1"/><path d="M1851 87v15"/></g>
<g fill="#c5c5c5"><circle cx="1876" cy="95" r="1.300"/><circle cx="1881" cy="95" r="1.300"/><circle cx="1886" cy="95" r="1.300"/></g>

<!-- codelens icons -->
<path d="M943 572l-6 6 6 6M950 572l6 6-6 6M949 570l-4 16" fill="none" stroke="#a8a8a8" stroke-width="2"/>
<path d="M962 576l5.500 5.500L973 576" fill="none" stroke="#a8a8a8" stroke-width="1.200"/>
<path d="M1160.500 573.500l9 9M1169.500 573.500l-9 9" stroke="#a8a8a8" stroke-width="1.200"/>

<!-- status icons -->
<path d="M70 1062l4 4.500-4 4.500M82 1060l-4 4.500 4 4.500" fill="none" stroke="#fff" stroke-width="1.200"/>
<g fill="none" stroke="#ccc" stroke-width="1.200">
<circle cx="106.500" cy="1061" r="2.500"/><circle cx="106.500" cy="1074" r="2.500"/><circle cx="115" cy="1064" r="2.500"/><path d="M106.500 1063.500v8M115 1066.500c0 3-4 4-8.500 5"/>
<path d="M172.500 1070h-1.500a3 3 0 01-1-6 4.500 4.500 0 018.500-1 3.500 3.500 0 012 7h-1.500M176 1074v-7M173.500 1069.500l2.500-2.500 2.500 2.500"/>
<circle cx="209.600" cy="1066" r="7"/><path d="M206.500 1063l6 6M212.500 1063l-6 6"/>
<path d="M242 1059l7.500 14h-15zM242 1064v5M242 1071v1"/>
<rect x="522" y="1060" width="14" height="10" rx="1"/><path d="M524 1073h4"/><circle cx="533" cy="1072" r="3.500"/>
<circle cx="1045.500" cy="1065" r="6"/><path d="M1050 1070l4 4.500M1043 1065h5M1045.500 1062.500v5"/>
<path d="M1325 1061a5 5 0 015 0M1331 1061a6 6 0 014 5" stroke-linecap="round"/>
<path d="M1534 1066a7 7 0 017-6 7 7 0 017 5" stroke-linecap="round"/>
<circle cx="1652" cy="1067" r="2"/><path d="M1646 1068a6 6 0 0112 0"/>
<path d="M1738 1060l5.500 3v7l-5.500 3-5.500-3v-7z"/><circle cx="1738" cy="1066.500" r="2.500"/>
<path d="M1877 1071c1-1 2-2 2-5a4.500 4.500 0 019 0c0 3 1 4 2 5zM1881.500 1071a2 2 0 004 0"/>
</g>
<circle cx="1888" cy="1060" r="2.400" fill="#ccc"/>
<use href="#cp" x="1457" y="1059" width="17" height="15"/>
<path d="M1496 1060h6v3h-3v3h-3zM1503 1061h8v5h-3v3h-5zM1500 1068h3v4h-3z" fill="#ddd"/>
<path d="M1838 1064l6 1 3-3 5 2 2 5-3 5-5 1-4-5-4-4z" fill="#ffc107"/>
</svg>
</div></body></html>
